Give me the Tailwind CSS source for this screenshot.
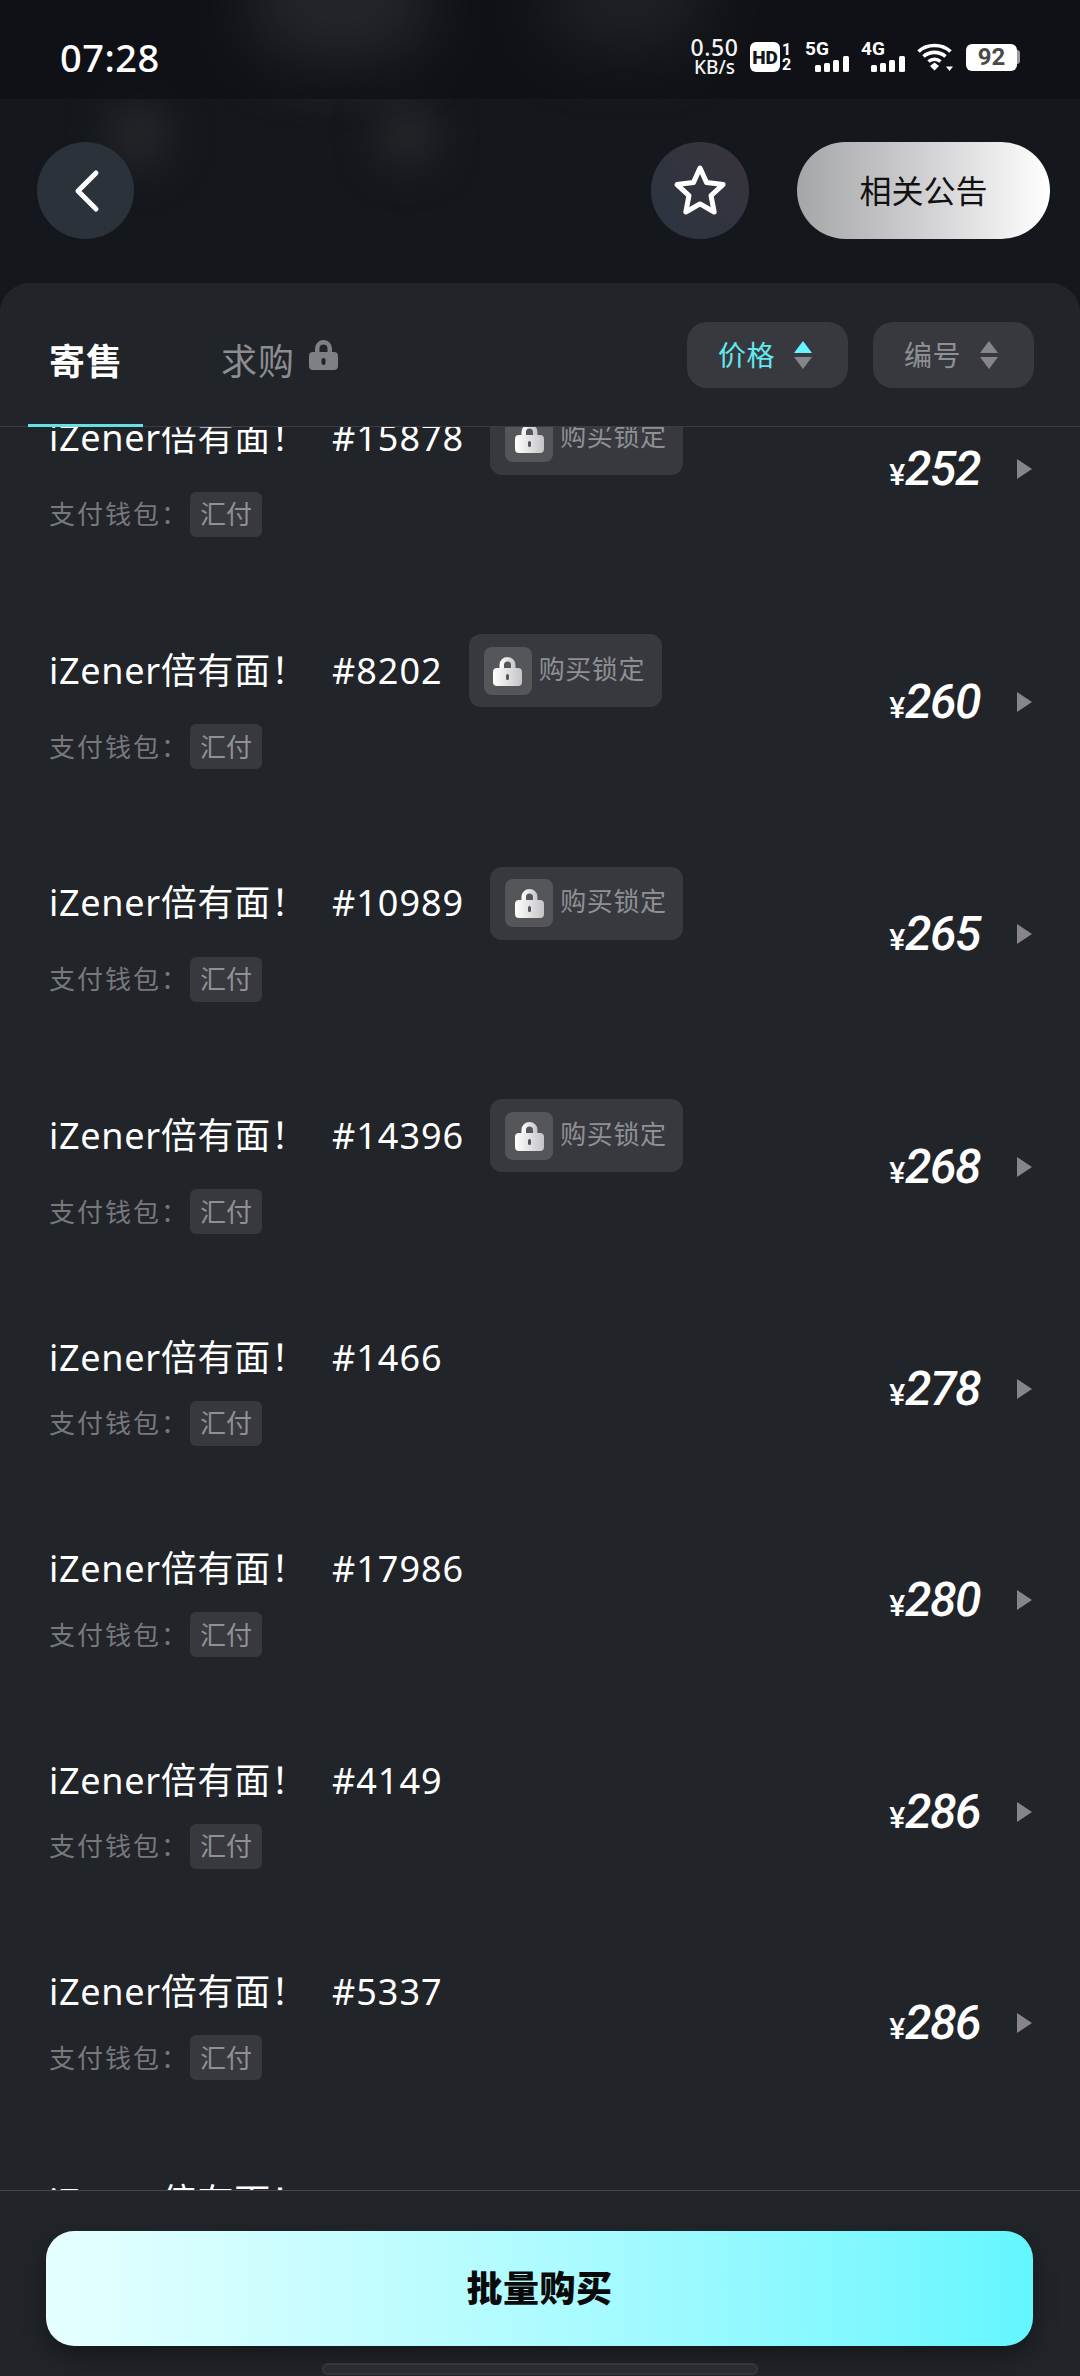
<!DOCTYPE html>
<html lang="zh-CN">
<head>
    <meta charset="UTF-8">
    <meta name="viewport" content="width=device-width, initial-scale=1.0">
    <title>寄售列表</title>
    <script src="https://cdn.jsdelivr.net/npm/@tailwindcss/browser@4"></script>
</head>
<body class="bg-[#14171c] font-['Noto_Sans','Noto_Sans_CJK_SC',sans-serif] text-white">
<div class="relative w-[1080px] h-[2376px] overflow-hidden flex flex-col">

    <!-- blurred banner behind the header -->
    <div class="absolute left-[250px] -top-[50px] w-[180px] h-[110px] rounded-full bg-[#5a5a60] blur-[30px]"></div>
    <div class="absolute left-[546px] -top-[50px] w-[160px] h-[100px] rounded-full bg-[#48484e] blur-[30px]"></div>
    <div class="absolute left-[108px] top-[100px] w-[60px] h-[70px] rounded-full bg-[#26272a] blur-[20px]"></div>
    <div class="absolute left-[377px] top-[102px] w-[60px] h-[65px] rounded-full bg-[#26272a] blur-[20px]"></div>

    <!-- status bar -->
    <div class="relative h-[99px] shrink-0 bg-[#0e1014]/70 flex items-center pt-[15px] pl-[60px] pr-[60px] justify-between">
        <span class="text-[38px] leading-none font-medium tracking-[0.5px]">07:28</span>
        <div class="flex items-center gap-[12px]">
            <div class="w-[47px] flex flex-col items-center text-[#f4f4f4] font-medium">
                <span class="text-[23px] tracking-[0.6px] leading-[21px]">0.50</span>
                <span class="text-[19px] leading-[19px]">KB/s</span>
            </div>
            <div class="w-[43px] flex items-center">
                <div class="w-[30px] h-[30px] bg-white rounded-[6px] flex items-center justify-center text-[#14171c] text-[19px] font-['Roboto'] font-black leading-none">HD</div>
                <div class="flex flex-col text-[16px] font-['Roboto'] font-bold leading-[15px] w-[13px] items-center"><span>1</span><span>2</span></div>
            </div>
            <div class="relative w-[44px] h-[30px]">
                <span class="absolute left-0 -top-[1px] text-[19px] font-['Roboto'] font-bold leading-[16px]">5G</span>
                <svg class="absolute right-0 bottom-0" width="34" height="16" viewBox="0 0 34 16" fill="#fff"><rect x="0" y="9" width="6" height="7" rx="1.5"/><rect x="9" y="7" width="6" height="9" rx="1.5"/><rect x="18" y="4" width="6" height="12" rx="1.5"/><rect x="28" y="0" width="6" height="16" rx="1.5"/></svg>
            </div>
            <div class="relative w-[44px] h-[30px]">
                <span class="absolute left-0 -top-[1px] text-[19px] font-['Roboto'] font-bold leading-[16px]">4G</span>
                <svg class="absolute right-0 bottom-0" width="34" height="16" viewBox="0 0 34 16" fill="#fff"><rect x="0" y="9" width="6" height="7" rx="1.5"/><rect x="9" y="7" width="6" height="9" rx="1.5"/><rect x="18" y="4" width="6" height="12" rx="1.5"/><rect x="28" y="0" width="6" height="16" rx="1.5"/></svg>
            </div>
            <svg width="37" height="30" viewBox="0 0 37 30" fill="none" stroke="#fff" stroke-width="3.6">
                <path d="M1.5 9.5C10 1.5 25 1.5 33.5 9.5"/>
                <path d="M6.5 14.5C12.5 9 22.5 9 28.5 14.5"/>
                <path d="M11.5 19.5C15 16.5 20 16.5 23.5 19.5"/>
                <path d="M13 24L17.5 20.5L22 24L17.5 28.5Z" fill="#fff" stroke="none"/>
                <path d="M29 24.5H36L32.5 29Z" fill="#fff" stroke="none"/>
            </svg>
            <div class="w-[54px] flex items-center">
                <div class="w-[51px] h-[27px] bg-white rounded-[6px] flex items-center justify-center text-[#4a4a4a] text-[24px] font-['Roboto'] font-bold leading-none">92</div>
                <div class="w-[3px] h-[14px] bg-[#9a9a9a] rounded-r-[3px]"></div>
            </div>
        </div>
    </div>

    <!-- top actions -->
    <div class="relative h-[184px] shrink-0 pl-[37px] pr-[30px] pt-[43px] flex items-start">
        <div class="w-[97px] h-[97px] rounded-full bg-[#2b323a] flex items-center justify-center">
            <svg width="32" height="46" viewBox="0 0 32 46" fill="none" stroke="#fff" stroke-width="5" stroke-linecap="round" stroke-linejoin="round"><path d="M26 5L8 23L26 41"/></svg>
        </div>
        <div class="ml-auto w-[98px] h-[97px] rounded-full bg-gradient-to-tr from-[#2b3440] to-[#38343c] flex items-center justify-center">
            <svg width="56" height="54" viewBox="0 0 56 54" fill="none" stroke="#fff" stroke-width="5" stroke-linejoin="round"><path d="M28 4L34.6 18.6L51 20.6L39 31.6L42.2 48L28 39.9L13.8 48L17 31.6L5 20.6L21.4 18.6Z"/></svg>
        </div>
        <div class="ml-[48px] w-[253px] h-[97px] rounded-full bg-gradient-to-r from-[#a5a6a8] via-[#d0d0d2] to-white flex items-center justify-center text-[#111] text-[32px] leading-none">相关公告</div>
    </div>

    <!-- sheet -->
    <div class="relative flex-1 min-h-0 bg-[#212429] rounded-t-[30px] flex flex-col">

        <!-- tabs -->
        <div class="relative h-[144px] shrink-0 border-b border-[#3a3c41] pl-[49px] pr-[46px] flex items-start z-10 bg-[#212429] rounded-t-[30px]">
            <span class="mt-[52px] text-[36px] leading-[54px] font-bold tracking-[1px]">寄售</span>
            <span class="ml-[98px] mt-[52px] text-[36px] leading-[54px] tracking-[1px] text-[#8c8d91]">求购</span>
            <svg class="ml-[14px] mt-[56px]" width="29" height="31" viewBox="0 0 29 31" fill="#7f8085">
                <path d="M6 14V9.5a8.5 8.5 0 0 1 17 0V14h-4.500V9.500a4 4 0 0 0-8 0V14Z"/>
                <path fill-rule="evenodd" d="M4 13h21a4 4 0 0 1 4 4v10a4 4 0 0 1-4 4H4a4 4 0 0 1-4-4V17a4 4 0 0 1 4-4Zm10.500 6a2 2 0 0 0-2 2v3a2 2 0 0 0 4 0v-3a2 2 0 0 0-2-2Z"/>
            </svg>
            <div class="ml-auto mt-[39px] flex gap-[25px]">
                <div class="w-[161px] h-[66px] rounded-[20px] bg-[#38393e] pl-[31px] flex items-center gap-[19px]">
                    <span class="text-[28px] leading-none text-[#63e8f0] tracking-[0.5px]">价格</span>
                    <svg width="18" height="30" viewBox="0 0 18 30"><path d="M9 1L18 13H0Z" fill="#66f4ff"/><path d="M9 29L0 17H18Z" fill="#86868a"/></svg>
                </div>
                <div class="w-[161px] h-[66px] rounded-[20px] bg-[#38393e] pl-[31px] flex items-center gap-[19px]">
                    <span class="text-[28px] leading-none text-[#8f9094] tracking-[0.5px]">编号</span>
                    <svg width="18" height="30" viewBox="0 0 18 30"><path d="M9 1L18 13H0Z" fill="#86868a"/><path d="M9 29L0 17H18Z" fill="#86868a"/></svg>
                </div>
            </div>
            <div class="absolute left-[28px] bottom-[-1px] w-[115px] h-[3px] bg-[#66e0e8]"></div>
        </div>

        <!-- list, scrolled so the first row is cut off by the tabs -->
        <div class="relative flex-1 min-h-0 overflow-hidden">
            <div class="flex flex-col pl-[49px] pr-[48px] -mt-[74px]" id="rows"></div>
            <!-- only the top of the next row's title shows above the bottom bar -->
            <div class="absolute left-[49px] bottom-[-30px] text-[36px] leading-none tracking-[0.7px]">iZener倍有面！</div>
        </div>

        <!-- bottom action -->
        <div class="relative h-[186px] shrink-0 border-t border-[#45474c] bg-[#212429] z-10 pl-[46px] pr-[47px] pt-[40px]">
            <div class="h-[115px] rounded-[28px] bg-gradient-to-r from-[#e6ffff] to-[#62f6ff] shadow-[0_10px_24px_rgba(0,0,0,0.35)] flex items-center justify-center text-[#0a0a0a] text-[36px] leading-none font-black tracking-[0.5px]">批量购买</div>
            <div class="absolute left-[322px] bottom-[1px] w-[436px] h-[12px] rounded-full border-2 border-[#33353b] bg-[#2a2c32]"></div>
        </div>
    </div>
</div>

<script>
    const lock_svg = `<svg width="29" height="30" viewBox="0 0 29 30"><defs><linearGradient id="lock-fill" x1="0" x2="1" y1="0" y2="0"><stop offset="0" stop-color="#ffffff"/><stop offset="1" stop-color="#c4c4c6"/></linearGradient></defs><path fill="url(#lock-fill)" d="M6.5 13V9a8 8 0 0 1 16 0v4h-4.5V9a3.5 3.5 0 0 0-7 0v4Z"/><path fill="url(#lock-fill)" fill-rule="evenodd" d="M4 12h21a4 4 0 0 1 4 4v10a4 4 0 0 1-4 4H4a4 4 0 0 1-4-4V16a4 4 0 0 1 4-4Zm10.5 6a1.5 1.5 0 0 0-1.5 1.500v3a1.500 1.500 0 0 0 3 0v-3a1.500 1.500 0 0 0-1.500-1.500Z"/></svg>`

    const rows = [
        { id: 15878, price: 252, locked: true },
        { id: 8202, price: 260, locked: true },
        { id: 10989, price: 265, locked: true },
        { id: 14396, price: 268, locked: true },
        { id: 1466, price: 278 },
        { id: 17986, price: 280 },
        { id: 4149, price: 286 },
        { id: 5337, price: 286 },
    ]

    document.getElementById('rows').innerHTML = rows.map((row) => `
        <div class="flex items-center py-[48.75px]">
            <div class="flex-1 flex flex-col gap-[17px]">
                <div class="flex items-center ${row.locked ? 'h-[73px]' : 'h-[52px]'}">
                    <span class="text-[36px] leading-none tracking-[0.7px] w-[283px]">iZener倍有面！</span>
                    <span class="text-[36px] leading-none tracking-[1px]">#${row.id}</span>
                    ${row.locked ? `<div class="ml-[26px] h-[73px] w-[193px] rounded-[12px] bg-[#38393e] flex items-center pl-[15px] gap-[7px]">
                        <div class="w-[48px] h-[48px] rounded-[8px] bg-[#55565a] flex items-center justify-center">${lock_svg}</div>
                        <span class="text-[26px] leading-none text-[#8f9094] tracking-[0.6px] -mt-[4px]">购买锁定</span>
                    </div>` : ''}
                </div>
                <div class="flex items-center">
                    <span class="text-[26px] leading-none text-[#77787c] tracking-[2px] w-[141px]">支付钱包：</span>
                    <span class="w-[72px] h-[45px] rounded-[6px] bg-[#38393e] flex items-center justify-center text-[26px] leading-none text-[#8f9094]">汇付</span>
                </div>
            </div>
            <div class="flex items-center">
                <span class="flex items-baseline font-['Roboto']"><span class="text-[30px] leading-none font-medium">¥</span><span class="text-[48px] leading-none font-medium italic tracking-[-1.5px]">${row.price}</span></span>
                <svg class="ml-[37px]" width="15" height="20" viewBox="0 0 15 20" fill="#86868a"><path d="M0 0L15 10L0 20Z"/></svg>
            </div>
        </div>`).join('')
</script>
</body>
</html>
